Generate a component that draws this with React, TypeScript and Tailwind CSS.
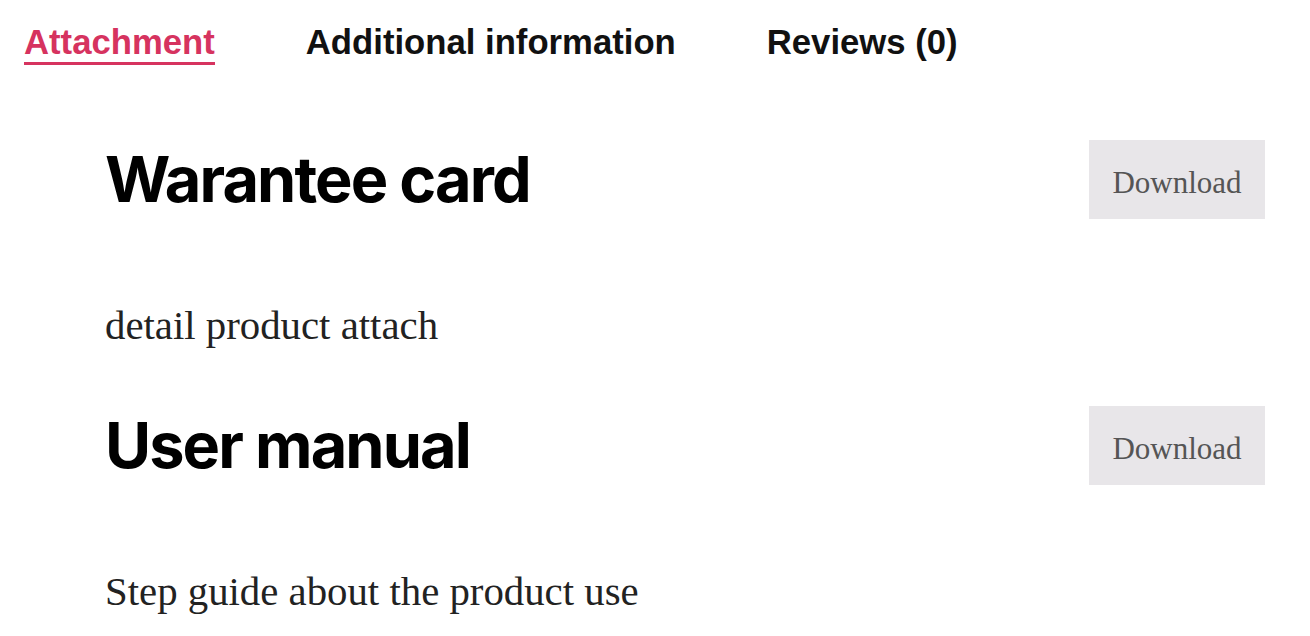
import React from "react";

function Section({ title, desc }: { title: string; desc: string }) {
  return (
    <div>
      <div className="flex items-start justify-between">
        <h2
          className="mt-[8px] text-[63px] leading-none font-bold tracking-[-0.03em] text-black"
          style={{ fontFamily: "Inter, 'Liberation Sans', sans-serif" }}
        >
          {title}
        </h2>
        <button
          className="flex h-[79px] w-[176px] items-center justify-center bg-[#e8e6e9] pt-[8px] text-[31px] text-[#555555]"
          style={{ fontFamily: "'Liberation Serif', 'DejaVu Serif', serif" }}
        >
          Download
        </button>
      </div>
      <p
        className="mt-[84px] text-[40.8px] leading-[46px] text-[#222222]"
        style={{ fontFamily: "'Liberation Serif', 'DejaVu Serif', serif" }}
      >
        {desc}
      </p>
    </div>
  );
}

export default function App() {
  return (
    <div className="min-h-[636px] w-[1310px] bg-white">
      <div
        className="flex gap-[91px] pl-[24px] pt-[22px] text-[34.7px] leading-[40px] font-bold"
        style={{ fontFamily: "'Liberation Sans', Arial, sans-serif" }}
      >
        <span className="inline-block border-b-[3px] border-[#d6335f] text-[#d6335f]">
          Attachment
        </span>
        <span className="text-[#111111]">Additional information</span>
        <span className="text-[#111111]">Reviews (0)</span>
      </div>
      <div className="ml-[105px] mr-[45px] mt-[75px] flex flex-col gap-[57px]">
        <Section title="Warantee card" desc="detail product attach" />
        <Section title="User manual" desc="Step guide about the product use" />
      </div>
    </div>
  );
}
